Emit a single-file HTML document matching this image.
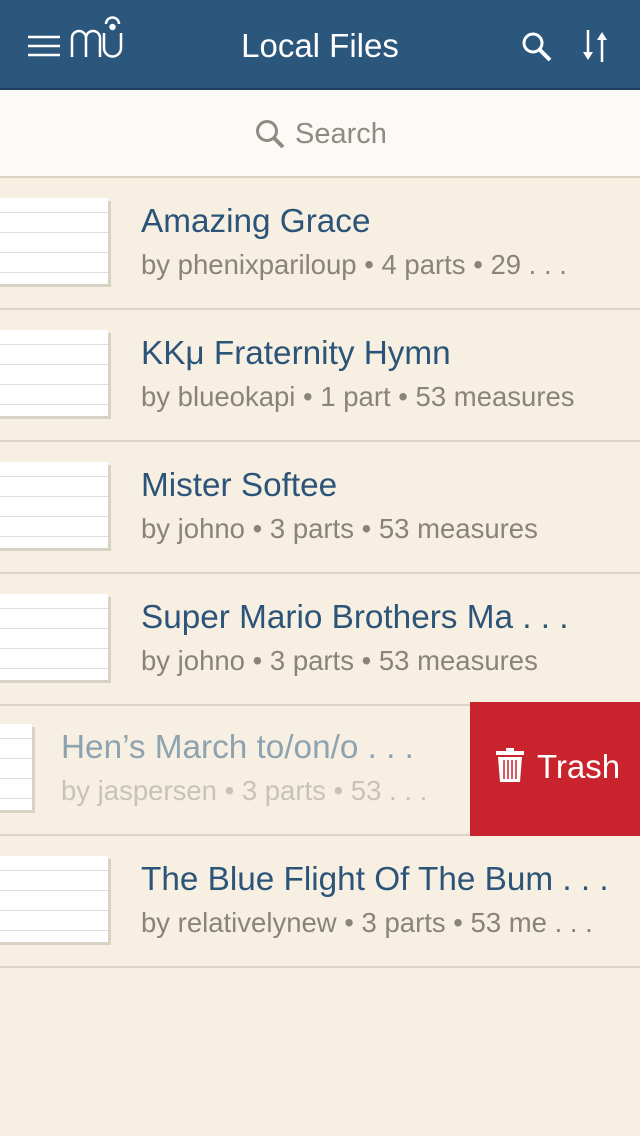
<!DOCTYPE html><html><head><style>
body{margin:0;width:640px;height:1136px;background:#f6efe2;font-family:"Liberation Sans",sans-serif;overflow:hidden;position:relative}
.hdr{position:absolute;left:0;top:0;width:640px;height:88px;background:#2c577c;border-bottom:2px solid #1c3f5f}
.hdr .t{position:absolute;left:0;right:0;top:27px;text-align:center;color:#fff;font-size:33px}
.sb{position:absolute;top:90px;left:0;width:640px;height:86px;background:#fcfaf6;border-bottom:2px solid #ddd3c3}
.row{position:absolute;left:0;width:640px;height:130px;border-bottom:2px solid #ddd5c6}
.th{position:absolute;top:20px;width:112px;height:86px;background:#fff;box-shadow:3px 3px 0 #d8d2c4;background-image:repeating-linear-gradient(180deg,transparent 0 14px,#ddd 14px 15px,transparent 15px 20px)}
.ti{position:absolute;left:141px;top:25px;font-size:33.3px;color:#2c5479;white-space:nowrap}
.su{position:absolute;left:141px;top:71px;font-size:27.5px;color:#8a8478;white-space:nowrap}
</style></head><body>
<div class="hdr">
<svg style="position:absolute;left:0;top:0" width="130" height="70" fill="none" stroke="#fff" stroke-width="2.5">
<path d="M28 37h32M28 46h32M28 55h32"/>
<path d="M72 57V38a7 7 0 0 1 14 0v19M86 38a7 7 0 0 1 14 0v19"/>
<path d="M104 33v15a8.5 8.5 0 0 0 17 0V33M106 24a6.5 6.5 0 0 1 13 0"/><circle cx="112.5" cy="27" r="2" fill="#fff"/>
</svg>
<div class="t">Local Files</div>
<svg style="position:absolute;left:520px;top:30px" width="34" height="34" fill="none" stroke="#fff" stroke-width="3"><circle cx="13" cy="13" r="9"/><path d="M20 20l10 10" stroke-width="4"/></svg>
<svg style="position:absolute;left:580px;top:28px" width="30" height="36" fill="#fff" stroke="#fff" stroke-width="2.5"><path d="M8 2v28" /><path d="M3 24l5 8 5-8z" stroke="none"/><path d="M22 34V8"/><path d="M17 12l5-8 5 8z" stroke="none"/></svg>
</div>
<div class="sb">
<svg style="position:absolute;left:254px;top:28px" width="34" height="34" fill="none" stroke="#8f8b83" stroke-width="3"><circle cx="13" cy="13" r="9.5"/><path d="M20 20l9 9" stroke-width="4"/></svg>
<div style="position:absolute;left:295px;top:28px;font-size:29px;color:#8f8b83">Search</div>
</div>
<div class="row" style="top:178px"><div class="th" style="left:-4px"></div><div class="ti">Amazing Grace</div><div class="su">by phenixpariloup • 4 parts • 29 . . .</div></div>
<div class="row" style="top:310px"><div class="th" style="left:-4px"></div><div class="ti">KKμ Fraternity Hymn</div><div class="su">by blueokapi • 1 part • 53 measures</div></div>
<div class="row" style="top:442px"><div class="th" style="left:-4px"></div><div class="ti">Mister Softee</div><div class="su">by johno • 3 parts • 53 measures</div></div>
<div class="row" style="top:574px"><div class="th" style="left:-4px"></div><div class="ti">Super Mario Brothers Ma . . .</div><div class="su">by johno • 3 parts • 53 measures</div></div>
<div class="row" style="top:704px"><div class="th" style="left:-80px"></div><div class="ti" style="left:61px;color:#8ea3b0">Hen’s March to/on/o . . .</div><div class="su" style="left:61px;color:#c9c2b6">by jaspersen • 3 parts • 53 . . .</div>
<div style="position:absolute;left:470px;top:-2px;width:170px;height:134px;background:#c9232d;color:#fff;font-size:33px"><svg style="position:absolute;left:26px;top:46px" width="28" height="34" fill="#fff"><rect x="0" y="3" width="28" height="4"/><rect x="10" y="0" width="8" height="4"/><path d="M2 9h24l-2 25H4z"/><path d="M8 12v19M12 12v19M16 12v19M20 12v19" stroke="#c9232d" stroke-width="1.5"/></svg><span style="position:absolute;left:67px;top:46px">Trash</span></div></div>
<div class="row" style="top:836px"><div class="th" style="left:-4px"></div><div class="ti">The Blue Flight Of The Bum . . .</div><div class="su">by relativelynew • 3 parts • 53 me . . .</div></div>
</body></html>
